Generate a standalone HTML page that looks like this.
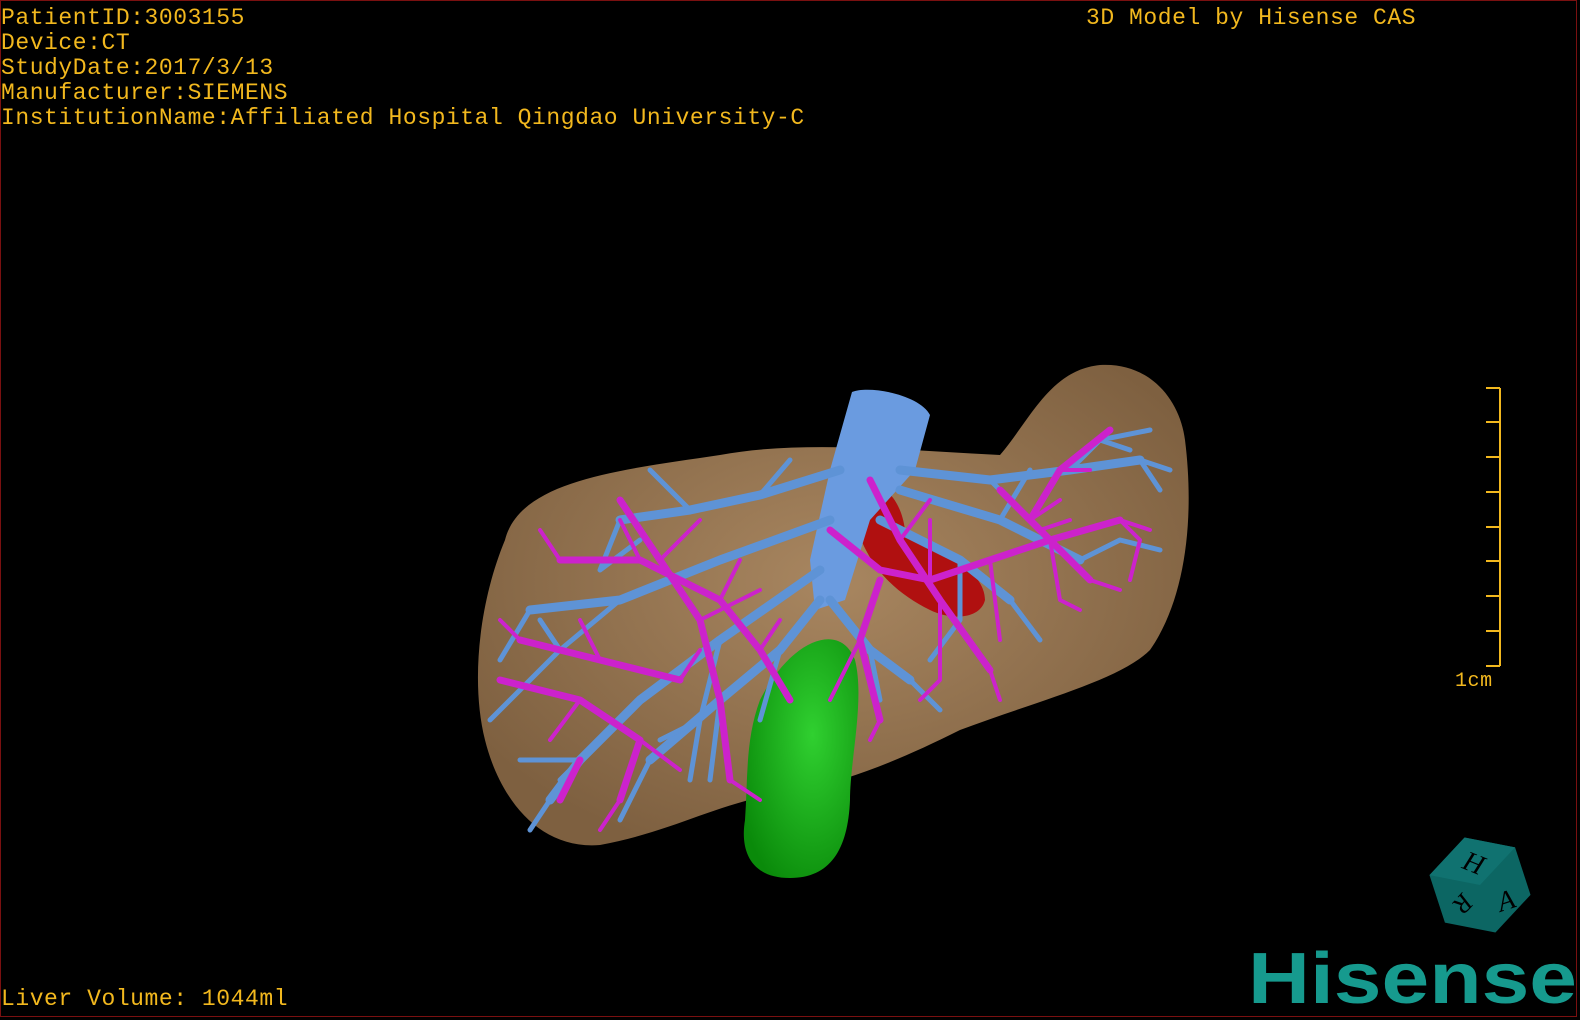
<!DOCTYPE html>
<html><head><meta charset="utf-8"><style>
html,body{margin:0;padding:0;background:#000;width:1580px;height:1020px;overflow:hidden}
.t{position:absolute;color:#f2b81e;font-family:"Liberation Mono","Noto Sans CJK SC",monospace;font-size:23px;line-height:25px;white-space:pre;letter-spacing:0.55px}
</style></head><body>
<div style="position:absolute;left:0;top:0;width:1577px;height:1017px;border:1px solid #7a1010;box-sizing:border-box"></div>
<div class="t" style="left:1px;top:6px">PatientID:3003155
Device:CT
StudyDate:2017/3/13
Manufacturer:SIEMENS
InstitutionName:Affiliated Hospital Qingdao University-C</div>
<div class="t" style="left:1086px;top:6px">3D Model by Hisense CAS</div>
<div class="t" style="left:1px;top:987px">Liver Volume: 1044ml</div>
<div class="t" style="left:1455px;top:669px;font-size:20px">1cm</div>
<svg width="1580" height="1020" style="position:absolute;left:0;top:0">
<defs>
<radialGradient id="lv" cx="0.5" cy="0.45" r="0.6"><stop offset="0" stop-color="#a88660"/><stop offset="1" stop-color="#7e6040"/></radialGradient>
<radialGradient id="gb" cx="0.6" cy="0.4" r="0.7"><stop offset="0" stop-color="#30d030"/><stop offset="1" stop-color="#0a8a0a"/></radialGradient>
</defs>
<g stroke="#f2b81e" stroke-width="2" fill="none">
<line x1="1500" y1="388" x2="1500" y2="666"/>
<line x1="1486" y1="388" x2="1500" y2="388"/><line x1="1486" y1="422" x2="1500" y2="422"/>
<line x1="1486" y1="457" x2="1500" y2="457"/><line x1="1486" y1="492" x2="1500" y2="492"/>
<line x1="1486" y1="527" x2="1500" y2="527"/><line x1="1486" y1="561" x2="1500" y2="561"/>
<line x1="1486" y1="596" x2="1500" y2="596"/><line x1="1486" y1="631" x2="1500" y2="631"/>
<line x1="1486" y1="666" x2="1500" y2="666"/>
</g>
<path d="M505,540 C520,480 620,470 720,455 C800,440 900,450 1000,455 C1030,420 1050,370 1100,365 C1150,362 1180,400 1185,440 C1195,520 1185,600 1150,650 C1120,680 1040,700 960,730 C900,760 850,780 800,790 C720,800 680,830 600,845 C540,850 500,800 485,740 C470,680 480,600 505,540 Z" fill="url(#lv)"/>
<path d="M760,700 C790,640 840,620 855,660 C865,700 850,760 850,800 C848,850 830,878 790,878 C750,878 740,850 745,820 C748,780 745,740 760,700 Z" fill="url(#gb)"/>
<path d="M850,500 C870,470 900,490 905,530 C940,550 985,570 985,600 C980,620 950,620 930,610 C890,590 860,560 850,500 Z" fill="#b01010"/>
<path d="M852,392 C870,385 920,395 930,415 L915,470 L870,520 L845,600 L815,610 L810,560 L830,470 Z" fill="#6a9be0"/>
<g fill="none" stroke-linecap="round" stroke-linejoin="round">
<g stroke="#5e93d6" stroke-width="9">
<path d="M840,470 L760,495 L690,510 L620,520 M830,520 L720,560 L620,600 L530,610 M820,570 L720,640 L640,700 L580,760 L550,800"/>
<path d="M900,470 L990,480 L1070,470 L1140,460 M900,490 L1000,520 L1080,560 M880,520 L960,560 L1010,600"/>
<path d="M820,600 L780,650 L720,700 L650,760 M830,600 L870,650 L910,680"/>
</g>
<g stroke="#5e93d6" stroke-width="5">
<path d="M690,510 L650,470 M620,520 L600,570 M530,610 L500,660 M620,600 L560,650 L510,700 M640,700 L600,740 L560,780 M720,640 L700,720 L690,780 M550,800 L530,830 M580,760 L520,760 M650,760 L620,820 M720,700 L710,780 M1070,470 L1100,440 L1150,430 M1140,460 L1170,470 M1080,560 L1120,540 L1160,550 M1010,600 L1040,640 M960,560 L960,620 L930,660 M1000,520 L1030,470 M760,495 L790,460 M870,650 L880,700 M910,680 L940,710 M780,650 L760,720 M600,570 L640,540 M560,650 L540,620 M510,700 L490,720 M700,720 L660,740 M1140,460 L1160,490 M1100,440 L1130,450 M990,480 L1010,500"/>
</g>
<g stroke="#cc22cc" stroke-width="7">
<path d="M560,560 L640,560 L720,600 L760,650 L790,700 M620,500 L660,560 L700,620 L720,700 L730,780 M520,640 L600,660 L680,680 M500,680 L580,700 L640,740 L620,800 M560,800 L580,760"/>
<path d="M830,530 L880,570 L930,580 L990,560 L1050,540 L1120,520 M870,480 L900,540 L940,600 L990,670 M1000,490 L1040,530 L1090,580 M1110,430 L1060,470 L1030,520 M880,580 L860,640 L880,720"/>
</g>
<g stroke="#cc22cc" stroke-width="4">
<path d="M560,560 L540,530 M640,560 L620,520 M720,600 L740,560 M660,560 L700,520 M520,640 L500,620 M580,700 L550,740 M640,740 L680,770 M730,780 L760,800 M620,800 L600,830 M700,620 L760,590 M1120,520 L1140,540 L1130,580 M1050,540 L1060,600 L1080,610 M990,670 L1000,700 M940,600 L940,680 L920,700 M1090,580 L1120,590 M1030,520 L1060,500 M930,580 L930,520 M880,720 L870,740 M860,640 L830,700 M990,560 L1000,640 M600,660 L580,620 M680,680 L700,650 M760,650 L780,620 M1120,520 L1150,530 M1060,470 L1090,470 M900,540 L930,500 M1040,530 L1070,520"/>
</g>
</g>
<g transform="translate(1480,885) rotate(-18)">
<polygon points="0,-50 45,-25 45,25 0,50 -45,25 -45,-25" fill="#0c6663"/>
<polygon points="0,-50 45,-25 0,0 -45,-25" fill="#107270"/>
<text x="0" y="-14" font-family="Liberation Serif,serif" font-style="italic" font-size="28" fill="#000" text-anchor="middle" transform="rotate(40 0 -22)">H</text>
<text x="-22" y="20" font-family="Liberation Serif,serif" font-style="italic" font-size="26" fill="#000" text-anchor="middle" transform="rotate(150 -22 12)">R</text>
<text x="20" y="32" font-family="Liberation Serif,serif" font-style="italic" font-size="28" fill="#000" text-anchor="middle">A</text>
</g>
<text x="1248" y="1003" font-family="Liberation Sans,sans-serif" font-weight="bold" font-size="72" fill="#169a8e" textLength="329" lengthAdjust="spacingAndGlyphs">Hisense</text>
</svg>
</body></html>
